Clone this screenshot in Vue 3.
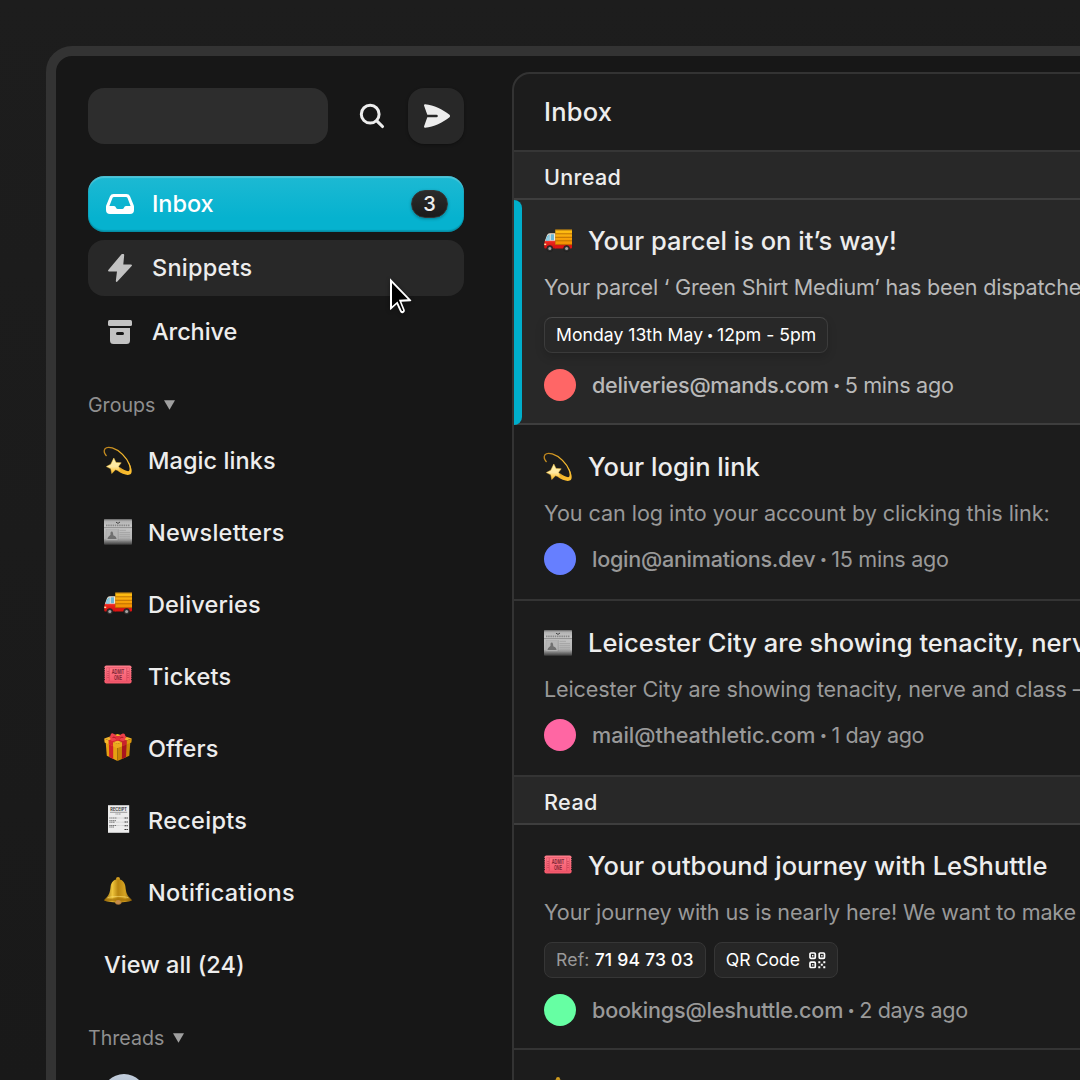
<script setup>
const nav = [
  { label: 'Inbox', icon: 'inbox', count: 3, track: -0.06 },
  { label: 'Snippets', icon: 'bolt', hover: true, track: 0.23 },
  { label: 'Archive', icon: 'archive', track: -0.08 },
]

const groups = [
  { label: 'Magic links', emoji: 'dizzy', track: 0.08 },
  { label: 'Newsletters', emoji: 'news', track: 0.27 },
  { label: 'Deliveries', emoji: 'truck', track: 0.16 },
  { label: 'Tickets', emoji: 'ticket', track: 0.24 },
  { label: 'Offers', emoji: 'gift', track: 0.1 },
  { label: 'Receipts', emoji: 'receipt', track: 0.28 },
  { label: 'Notifications', emoji: 'bell', track: 0.32 },
]

const sections = [
  {
    name: 'Unread',
    track: 0.3,
    mails: [
      {
        active: true,
        emoji: 'truck',
        title: 'Your parcel is on it’s way!',
        titleTrack: 0,
        preview: 'Your parcel ‘ Green Shirt Medium’ has been dispatched',
        previewTrack: -0.22,
        chips: [{ value: 'Monday 13th May', extra: '12pm - 5pm', track: 0.03 }],
        color: '#ff6666',
        from: 'deliveries@mands.com',
        fromTrack: -0.26,
        time: '5 mins ago',
        timeTrack: -0.3,
      },
      {
        emoji: 'dizzy',
        title: 'Your login link',
        titleTrack: 0.02,
        preview: 'You can log into your account by clicking this link:',
        previewTrack: -0.06,
        color: '#667fff',
        from: 'login@animations.dev',
        fromTrack: -0.27,
        time: '15 mins ago',
        timeTrack: -0.3,
      },
      {
        emoji: 'news',
        title: 'Leicester City are showing tenacity, nerve and class',
        titleTrack: 0.04,
        preview: 'Leicester City are showing tenacity, nerve and class – match report',
        previewTrack: -0.15,
        color: '#ff66a3',
        from: 'mail@theathletic.com',
        fromTrack: -0.03,
        time: '1 day ago',
        timeTrack: -0.43,
      },
    ],
  },
  {
    name: 'Read',
    track: 0.4,
    mails: [
      {
        emoji: 'ticket',
        title: 'Your outbound journey with LeShuttle',
        titleTrack: 0.03,
        preview: 'Your journey with us is nearly here! We want to make sure',
        previewTrack: -0.16,
        chips: [
          { label: 'Ref:', value: '71 94 73 03', track: 0.18, bold: true },
          { value: 'QR Code', track: 0.02, qr: true },
        ],
        color: '#66ffa3',
        from: 'bookings@leshuttle.com',
        fromTrack: -0.19,
        time: '2 days ago',
        timeTrack: -0.36,
      },
      {
        emoji: 'bell',
        title: 'Notification',
        titleTrack: 0,
        preview: '',
        previewTrack: 0,
        color: '#66ffa3',
        from: '',
        fromTrack: 0,
        time: '',
        timeTrack: 0,
      },
    ],
  },
]

const ls = (n) => ({ letterSpacing: `${n}px` })
</script>

<template>
  <div class="stage">
    <svg class="sprite" width="0" height="0" aria-hidden="true">
      <defs>
        <linearGradient id="gStar" x1="0" y1="0" x2="0" y2="1">
          <stop offset="0" stop-color="#fff3b0" />
          <stop offset=".55" stop-color="#ffe9a0" />
          <stop offset="1" stop-color="#fdb515" />
        </linearGradient>
        <linearGradient id="gTail" x1="0" y1="0" x2="1" y2="1">
          <stop offset="0" stop-color="#b87f1b" />
          <stop offset=".5" stop-color="#f3b62b" />
          <stop offset="1" stop-color="#ffc233" />
        </linearGradient>
        <linearGradient id="gNews" x1="0" y1="0" x2="0" y2="1">
          <stop offset="0" stop-color="#a9a9a9" />
          <stop offset=".25" stop-color="#c6c6c6" />
          <stop offset=".75" stop-color="#b4b4b4" />
          <stop offset="1" stop-color="#3a3a3a" />
        </linearGradient>
        <linearGradient id="gCargo" x1="0" y1="0" x2="0" y2="1">
          <stop offset="0" stop-color="#ffc315" />
          <stop offset="1" stop-color="#f28a00" />
        </linearGradient>
        <linearGradient id="gCab" x1="0" y1="0" x2="0" y2="1">
          <stop offset="0" stop-color="#f3e3cf" />
          <stop offset=".45" stop-color="#f2e9e0" />
          <stop offset=".55" stop-color="#f0281e" />
          <stop offset="1" stop-color="#c80f10" />
        </linearGradient>
        <linearGradient id="gBell" x1="0" y1="0" x2="1" y2="0">
          <stop offset="0" stop-color="#8a5f05" />
          <stop offset=".3" stop-color="#efc53c" />
          <stop offset=".5" stop-color="#b98610" />
          <stop offset=".75" stop-color="#d5a322" />
          <stop offset="1" stop-color="#7d5204" />
        </linearGradient>
        <linearGradient id="gTicket" x1="0" y1="0" x2="0" y2="1">
          <stop offset="0" stop-color="#ff7d8b" />
          <stop offset="1" stop-color="#f5576b" />
        </linearGradient>
      </defs>

      <symbol id="e-dizzy" viewBox="0 0 28 28" overflow="visible">
        <path d="M2.200 9.600C.6 7.600-.2 4.600.8 3C3.600-.6 12 1.800 18.500 8.400C25 15 27.600 22 25.800 26" fill="none" stroke="url(#gTail)" stroke-width="1.300" stroke-linecap="round" />
        <path d="M24.500 16.200C27.600 21 28.600 25.800 26.900 27.800C25 30.100 18.500 28.600 13.500 24.800L15.500 21C20 24.500 24 25.800 25.200 24.800C26.300 24 26 20.600 24.500 16.200Z" fill="url(#gTail)" />
        <path d="M9.800 12L12 16.400L17.200 16.800L14.600 20.300L16.400 25L11.400 23.800L7.800 27.500L6.800 22.800L2.400 20.600L6.800 18.200Z" fill="url(#gStar)" stroke="#f6c445" stroke-width=".5" stroke-linejoin="round" />
      </symbol>

      <symbol id="e-news" viewBox="0 0 28 28">
        <rect x="0" y="2.500" width="28" height="25.300" rx=".8" fill="url(#gNews)" />
        <path d="M0 3H28" stroke="#8c8c8c" stroke-width="1" />
        <path d="M12 5.200L14 6.400L16 5" stroke="#444" stroke-width="1" fill="none" />
        <path d="M2 8.300H26" stroke="#888" stroke-width="1.800" stroke-dasharray="1.500 .7" />
        <path d="M0 10.600H28" stroke="#7a7a7a" stroke-width=".7" />
        <rect x="2" y="12.500" width="11.500" height="10.500" fill="#b5b5b5" stroke="#a0a0a0" stroke-width=".4" />
        <path d="M3.500 22C4 19 6 19 6.600 17.500C6 15 7.500 13.800 8.600 15C9.400 16.500 9 17.500 9.500 18.500C11.500 19 12.300 20 12.600 22Z" fill="#707070" />
        <path d="M15.500 13.300H22M15.500 15.500H26M15.500 17.400H26M15.500 19.300H26M15.500 21.200H26M15.500 23H26" stroke="#989898" stroke-width=".6" />
        <path d="M14.500 12V24.500" stroke="#8b8b8b" stroke-width=".4" />
      </symbol>

      <symbol id="e-truck" viewBox="0 0 28 28">
        <path d="M.3 19C.3 16 .8 15 2 12C3 8.500 4 7.200 6 7.200H11.500V22.500H1C.2 22.500 .2 21.500 .3 19Z" fill="url(#gCab)" />
        <path d="M1.900 14.400C2.800 10.600 3.700 8.600 5.600 8.300V14.500C4 15 2.600 15 1.900 14.400ZM6.700 8.300H10V14.300H6.700Z" fill="#6cb7d6" />
        <path d="M2.200 14L4.800 8.800L5 14.400Z" fill="#8fd0e4" />
        <path d="M11 17.500H28V21.500Q28 22.600 27 22.600H11Z" fill="#dd1513" />
        <rect x="11.300" y="3.700" width="16.700" height="15.300" fill="url(#gCargo)" />
        <path d="M11.300 4H28" stroke="#a86c10" stroke-width=".9" />
        <path d="M11.300 7.800H28M11.300 11.300H28M11.300 14.800H28" stroke="#ad6200" stroke-width=".8" />
        <path d="M11.300 18.700H28" stroke="#a14a05" stroke-width=".7" />
        <rect x=".2" y="17.600" width="2" height="1.500" fill="#ffdba0" />
        <g fill="#343434" stroke="#151515" stroke-width=".5">
          <circle cx="5.800" cy="22.600" r="3" />
          <circle cx="22.600" cy="22.600" r="3" />
        </g>
        <g fill="#a5a5a5">
          <circle cx="5.800" cy="22.600" r="1.500" />
          <circle cx="22.600" cy="22.600" r="1.500" />
        </g>
      </symbol>

      <symbol id="e-ticket" viewBox="0 0 28 28">
        <rect x="0.400" y="4.500" width="27.200" height="18" rx="2" fill="url(#gTicket)" />
        <path d="M.4 7V20M27.600 7V20" stroke="#1b1b1b" stroke-width="1" stroke-dasharray="1 1.200" />
        <rect x="2.800" y="6.800" width="22.400" height="13.400" fill="none" stroke="#e04f62" stroke-width=".6" />
        <path d="M5.200 7V20M22.800 7V20" stroke="#d0445a" stroke-width=".7" />
        <path d="M4 10V17M24 10V17" stroke="#a92c41" stroke-width=".8" stroke-dasharray="1 1" />
        <text x="14" y="13.200" text-anchor="middle" textLength="12.500" lengthAdjust="spacingAndGlyphs" class="admit">ADMIT</text>
        <text x="14" y="19.200" text-anchor="middle" textLength="8" lengthAdjust="spacingAndGlyphs" class="admit">ONE</text>
      </symbol>

      <symbol id="e-gift" viewBox="0 0 28 28">
        <path d="M1.600 8L13.500 13V28L2.800 22.800Z" fill="#e6a012" />
        <path d="M13.500 13L26.400 8L25.300 22.800L13.500 28Z" fill="#c98407" />
        <path d="M.2 5.500L13.500 1L27.800 5.500L13.500 11Z" fill="#f1b52c" />
        <path d="M.2 5.500L13.500 11V15L.6 9.500Z" fill="#f6b62a" />
        <path d="M27.800 5.500L13.500 11V15L27.400 9.500Z" fill="#dc970e" />
        <path d="M4.800 4L18 9.300V13.300L22.800 11.500V7.400L9 2.700Z" fill="#c8232b" />
        <path d="M22.800 4.200L9.200 9.200V13.200L4.600 11.300V7.300L18.500 2.400Z" fill="#d9262f" />
        <path d="M4.900 11.300L9.200 13.200V25.900L5.200 24Z" fill="#cf2029" />
        <path d="M18 13.300L22.600 11.400L22 24.300L17.900 26Z" fill="#a9141e" />
        <path d="M9.200 9.200L13.500 11L18 9.300V13.300L13.500 15L9.200 13.200Z" fill="#eba91d" />
        <path d="M14 5.500C10 9 6.500 8.500 6.400 6C5.800 2 7 0 9 .4C11 1 13.500 3 14 5.500ZM14 5.500C18 9 21 8.400 21.300 6C22 2 20.600 .2 18.800 .5C16.600 1 14.500 3 14 5.500Z" fill="#ee3f49" />
        <path d="M8.300 5C9 3.800 10.500 4 12 5.200M19.500 5C18.800 3.800 17.500 4 16 5.200" stroke="#a4121c" stroke-width=".9" fill="none" />
        <rect x="11.800" y="3" width="4.300" height="4.400" rx="1.300" fill="#e22f3a" />
      </symbol>

      <symbol id="e-receipt" viewBox="0 0 28 28">
        <rect x="4" y=".2" width="21.200" height="27.600" fill="#ececec" />
        <text x="14.600" y="5.800" text-anchor="middle" textLength="16.500" lengthAdjust="spacingAndGlyphs" class="rcpt">RECEIPT</text>
        <path d="M6 7.300H23.200" stroke="#777" stroke-width=".7" />
        <path d="M11.500 9H17" stroke="#777" stroke-width=".8" stroke-dasharray="1.200 .5" />
        <path d="M5.300 13H13M5.300 15.700H12M5.300 17.200H11M5.300 20.500H12M5.300 22H10" stroke="#555" stroke-width=".8" stroke-dasharray="1.400 .4" />
        <path d="M13 13H20M12 17.200H20M12 20.500H20" stroke="#999" stroke-width=".5" stroke-dasharray=".6 .6" />
        <path d="M20.500 13H24M20.500 17H24M20.500 20.800H24M20.500 24.500H24" stroke="#333" stroke-width="1.100" stroke-dasharray="1.500 .4" />
      </symbol>

      <symbol id="e-bell" viewBox="0 0 28 28">
        <ellipse cx="14" cy="2" rx="2" ry="1.900" fill="#d19c20" />
        <ellipse cx="14.300" cy="25" rx="3.300" ry="2.800" fill="#a8763a" />
        <path d="M14 2.200C18.500 2.200 20.800 5.500 21.400 9.500C22 15 22.800 18 25.500 20.500C27 22 27.900 22.600 27.900 23.300C27.800 24.500 20 25.500 14 25.500C8 25.500 .2 24.500 .1 23.300C.1 22.600 1 22 2.500 20.500C5.200 18 6 15 6.600 9.500C7.200 5.500 9.500 2.200 14 2.200Z" fill="url(#gBell)" />
        <path d="M.3 23.200C6 20.600 22 20.600 27.700 23.200C22 25 6 25 .3 23.200Z" fill="#a6730a" opacity=".75" />
        <path d="M3.500 20.800C8 19 20 19 24.500 20.800" stroke="#ffe27a" stroke-width=".7" fill="none" opacity=".8" />
        <ellipse cx="14.200" cy="25" rx="2.700" ry="2" fill="#c78d4a" />
      </symbol>
    </svg>

    <div class="window">
      <aside class="sidebar">
        <div class="toolbar">
          <div class="field"></div>
          <div class="tool">
            <svg width="28" height="28" viewBox="0 0 28 28">
              <circle cx="12.200" cy="12.200" r="8.900" fill="none" stroke="#ededed" stroke-width="3" />
              <path d="M18.800 18.800L24.500 24.500" stroke="#ededed" stroke-width="3.100" stroke-linecap="round" />
            </svg>
          </div>
          <div class="tool raised">
            <svg width="28" height="28" viewBox="0 0 28 28">
              <path d="M3.200 2.300C12 3.400 20.500 7.200 27.500 12.800Q28.600 14 27.500 15.200C20.500 20.800 12 24.600 3.200 25.700Q1.700 25.800 2.100 24.300L5.300 15.300H14.500A1.300 1.300 0 0 0 14.500 12.700H5.300L2.100 3.700Q1.700 2.200 3.200 2.300Z" fill="#ededed" />
            </svg>
          </div>
        </div>

        <nav class="nav">
          <div v-for="n in nav" :key="n.label" class="row" :class="{ selected: n.count, hover: n.hover }">
            <span class="glyph">
              <svg v-if="n.icon === 'inbox'" width="28" height="20" viewBox="0 0 28 20">
                <path fill="#fff" fill-rule="evenodd" d="M7.500 0H20.500Q23 0 24 2.200L27.700 11.300Q28 12 28 12.800V16A4 4 0 0 1 24 20H4A4 4 0 0 1 0 16V12.800Q0 12 .3 11.300L4 2.200Q5 0 7.500 0ZM8 2.900Q7 2.900 6.600 3.800L3.400 12H8C9.200 12 9.500 12.800 10 13.800Q10.600 15 11.800 15H16.200Q17.400 15 18 13.800C18.500 12.800 18.800 12 20 12H24.600L21.400 3.800Q21 2.900 20 2.900Z" />
              </svg>
              <svg v-else-if="n.icon === 'bolt'" width="24" height="28" viewBox="0 0 24 28">
                <path d="M14 1L1 16.500H10L8.700 27L23 11.500H14.300L15.300 1Z" fill="#c2c2c2" stroke="#c2c2c2" stroke-width="1.800" stroke-linejoin="round" />
              </svg>
              <svg v-else width="24" height="24" viewBox="0 0 24 24">
                <rect width="24" height="6" rx="1.500" fill="#c2c2c2" />
                <path fill="#c2c2c2" fill-rule="evenodd" d="M2 8H22V20.500A3.500 3.500 0 0 1 18.500 24H5.500A3.500 3.500 0 0 1 2 20.500ZM9.500 12A1.500 1.500 0 0 0 9.500 15H14.500A1.500 1.500 0 0 0 14.500 12Z" />
              </svg>
            </span>
            <span class="label" :style="ls(n.track)">{{ n.label }}</span>
            <span v-if="n.count" class="count">{{ n.count }}</span>
          </div>
        </nav>

        <div class="heading">
          <span>Groups</span>
          <svg width="11" height="10" viewBox="0 0 11 10"><path d="M0 .3H11L5.500 9.700Z" fill="#a0a0a0" /></svg>
        </div>

        <div class="groups">
          <div v-for="g in groups" :key="g.label" class="row group">
            <svg class="emoji" viewBox="0 0 28 28"><use :href="'#e-' + g.emoji" /></svg>
            <span class="label" :style="ls(g.track)">{{ g.label }}</span>
          </div>
          <div class="row group"><span class="label more">View all (24)</span></div>
        </div>

        <div class="heading">
          <span>Threads</span>
          <svg width="11" height="10" viewBox="0 0 11 10"><path d="M0 .3H11L5.500 9.700Z" fill="#a0a0a0" /></svg>
        </div>
        <div class="person"></div>

        <svg class="cursor" width="28" height="40" viewBox="0 0 28 40">
          <path d="M2 2.200V33.200Q2 34.500 3 33.500L8.700 28.300L12 35.600Q13 37.800 15.200 36.900Q17.500 35.900 16.600 33.600L13.400 25.700L22.500 25.200Q24 25 23 24Z" fill="#fff" />
          <path d="M4 7V30.200L9.500 25.400L13.600 34.400Q14.200 35.300 14.900 34.900Q15.300 34.600 15 33.900L10.900 23.800L19.800 23.300Z" fill="#000" />
        </svg>
      </aside>

      <main class="panel">
        <header class="top">Inbox</header>
        <section v-for="s in sections" :key="s.name">
          <h2 class="band" :style="ls(s.track)">{{ s.name }}</h2>
          <article v-for="m in s.mails" :key="m.title" class="mail" :class="{ active: m.active, plain: !m.chips }">
            <div class="title">
              <svg class="emoji" viewBox="0 0 28 28"><use :href="'#e-' + m.emoji" /></svg>
              <span class="subject" :style="ls(m.titleTrack)">{{ m.title }}</span>
            </div>
            <p class="preview" :style="ls(m.previewTrack)">{{ m.preview }}</p>
            <div v-if="m.chips" class="chips">
              <span v-for="c in m.chips" :key="c.value" class="chip" :style="ls(c.track)">
                <span v-if="c.label" class="key">{{ c.label }}</span>
                <span :class="{ bold: c.bold }">{{ c.value }}</span>
                <template v-if="c.extra">
                  <span class="dot">•</span>
                  <span>{{ c.extra }}</span>
                </template>
                <svg v-if="c.qr" class="qr" width="17" height="17" viewBox="0 0 17 17">
                  <g fill="none" stroke="#fff" stroke-width="1.700">
                    <rect x="1" y="1" width="5.300" height="5.300" rx="1" />
                    <rect x="10.200" y="1" width="5.300" height="5.300" rx="1" />
                    <rect x="1" y="10.200" width="5.300" height="5.300" rx="1" />
                  </g>
                  <path fill="#fff" d="M3 3h1.400v1.400H3zM12.200 3h1.400v1.400h-1.400zM3 12.200h1.400v1.400H3zM9.300 9.300h2v2h-2zM14.300 9.300h2v2h-2zM11.800 11.800h2v2h-2zM9.300 14.300h2v2h-2zM14.300 14.300h2v2h-2z" />
                </svg>
              </span>
            </div>
            <div class="meta">
              <span class="avatar" :style="{ background: m.color }"></span>
              <span class="from" :style="ls(m.fromTrack)">{{ m.from }}</span>
              <span class="dot">•</span>
              <span class="time" :style="ls(m.timeTrack)">{{ m.time }}</span>
            </div>
          </article>
        </section>
      </main>
    </div>
  </div>
</template>

<style>
body {
  background: #1b1b1b;
  overflow: hidden;
}
</style>

<style scoped>
.stage {
  box-sizing: border-box;
  width: 1080px;
  height: 1080px;
  padding: 46px 0 0 46px;
  overflow: hidden;
  background: linear-gradient(180deg, #1d1d1d, #191919);
  color: #ededed;
  font-family: Inter, sans-serif;
  font-size: 23.5px;
  font-weight: 500;
  white-space: nowrap;
}
.sprite {
  position: absolute;
}
.admit {
  font: 700 6.6px 'Liberation Sans', sans-serif;
  fill: #7c2634;
}
.rcpt {
  font: 700 4.6px Inter, sans-serif;
  fill: #333;
}
.window {
  box-sizing: border-box;
  display: flex;
  width: 1100px;
  height: 1100px;
  border: 10px solid #333;
  border-radius: 26px;
  background: #171717;
}
.sidebar {
  position: relative;
  box-sizing: border-box;
  flex: none;
  width: 456px;
  padding: 32px 48px 0 32px;
}
.toolbar {
  display: flex;
  align-items: center;
  gap: 8px;
  margin-bottom: 32px;
}
.field {
  width: 240px;
  height: 56px;
  margin-right: 8px;
  border-radius: 16px;
  background: #2d2d2d;
}
.tool {
  display: flex;
  align-items: center;
  justify-content: center;
  width: 56px;
  height: 56px;
  border-radius: 16px;
}
.raised {
  background: #282828;
  box-shadow: 0 1px 3px rgba(0, 0, 0, 0.35);
}
.nav {
  display: flex;
  flex-direction: column;
  gap: 8px;
}
.row {
  box-sizing: border-box;
  display: flex;
  align-items: center;
  height: 56px;
  padding: 0 16px;
  border-radius: 16px;
}
.label {
  padding-bottom: 2px;
}
.more {
  letter-spacing: 0.05px;
}
.selected {
  color: #fff;
  background: linear-gradient(180deg, #1db9d3, #06b2cf 75%);
  box-shadow: inset 0 2px 1px rgba(255, 255, 255, 0.22), inset 0 -2px 1px rgba(0, 0, 0, 0.14),
    inset 0 0 0 1px rgba(0, 0, 0, 0.07);
}
.hover {
  background: #282828;
}
.glyph {
  display: flex;
  align-items: center;
  justify-content: center;
  width: 32px;
  margin-right: 16px;
}
.count {
  box-sizing: border-box;
  width: 37px;
  height: 28px;
  margin-left: auto;
  border: 1px solid #343434;
  border-radius: 14px;
  background: linear-gradient(180deg, #2b2b2b, #1b1b1b);
  box-shadow: 0 1px 3px rgba(0, 0, 0, 0.3);
  color: #ededed;
  font-size: 20px;
  line-height: 26px;
  text-align: center;
}
.heading {
  display: flex;
  align-items: center;
  gap: 9px;
  height: 24px;
  margin: 33px 0 16px;
  color: #8f8f8f;
  font-size: 19.6px;
  font-weight: 400;
}
.groups {
  display: flex;
  flex-direction: column;
  gap: 16px;
}
.emoji {
  flex: none;
  width: 28px;
  height: 28px;
  margin: 0 16px 3px 0;
  overflow: visible;
}
.group .emoji {
  margin-bottom: 5px;
}
.group:first-child .emoji {
  margin-bottom: 3px;
}
.person {
  width: 44px;
  height: 44px;
  margin: 24px 0 0 14px;
  border-radius: 50%;
  background: linear-gradient(180deg, #c3cedc, #8fa3bd);
}
.cursor {
  position: absolute;
  left: 332px;
  top: 220px;
  filter: drop-shadow(0 1px 2px rgba(0, 0, 0, 0.4));
}
.panel {
  box-sizing: border-box;
  flex: none;
  width: 640px;
  height: 1100px;
  margin-top: 16px;
  border: 2px solid #333;
  border-radius: 18px 0 0 0;
  background: #1c1c1c;
  overflow: hidden;
}
.top {
  height: 76px;
  padding-left: 30px;
  border-bottom: 2px solid #363636;
  font-size: 25.5px;
  line-height: 75px;
  letter-spacing: 0.2px;
}
.band {
  height: 46px;
  margin: 0;
  padding-left: 30px;
  border-bottom: 2px solid #3e3e3e;
  background: #282828;
  font-size: 21.6px;
  font-weight: 500;
  line-height: 50px;
}
.mail {
  position: relative;
  box-sizing: border-box;
  height: 225px;
  padding: 24px 0 0 30px;
  border-bottom: 2px solid #343434;
  color: #999;
  font-size: 21.6px;
  font-weight: 400;
}
.plain {
  height: 176px;
  padding-top: 25px;
}
.active {
  background: #282828;
  border-color: #3e3e3e;
  color: #b9b9b9;
}
.active::before {
  content: '';
  position: absolute;
  left: 0;
  top: 0;
  width: 8px;
  height: 225px;
  border-radius: 0 8px 8px 0;
  background: #00aecb;
}
.title {
  display: flex;
  align-items: center;
  height: 34px;
  color: #ededed;
  font-size: 25.5px;
  font-weight: 500;
}
.subject {
  padding-bottom: 2px;
}
.plain .subject {
  padding-bottom: 1px;
}
.preview {
  height: 34px;
  margin: 12px 0 13px;
  line-height: 35px;
}
.chips {
  display: flex;
  gap: 8px;
  margin-bottom: 16px;
}
.chip {
  box-sizing: border-box;
  display: flex;
  align-items: center;
  height: 36px;
  padding: 0 11px 1px;
  border: 1px solid #363636;
  border-radius: 8px;
  background: #262626;
  color: #fff;
  font-size: 17.6px;
}
.active .chip {
  border-color: #484848 #3c3c3c #3a3a3a;
  background: #282828;
  box-shadow: 0 4px 10px rgba(0, 0, 0, 0.16);
}
.key {
  margin-right: 5px;
  color: #999;
}
.bold {
  font-weight: 500;
}
.qr {
  margin: 1px 0 0 9px;
}
.meta {
  display: flex;
  align-items: center;
  height: 32px;
}
.plain .meta {
  margin-top: 13px;
}
.plain .from,
.plain .time {
  padding-bottom: 1px;
}
.avatar {
  width: 32px;
  height: 32px;
  margin-right: 16px;
  border-radius: 50%;
}
.from {
  font-weight: 500;
}
.dot {
  width: 16px;
  font-size: 13px;
  letter-spacing: 0;
  text-align: center;
}
.chip .dot {
  width: 14px;
  font-size: 12px;
}
</style>
